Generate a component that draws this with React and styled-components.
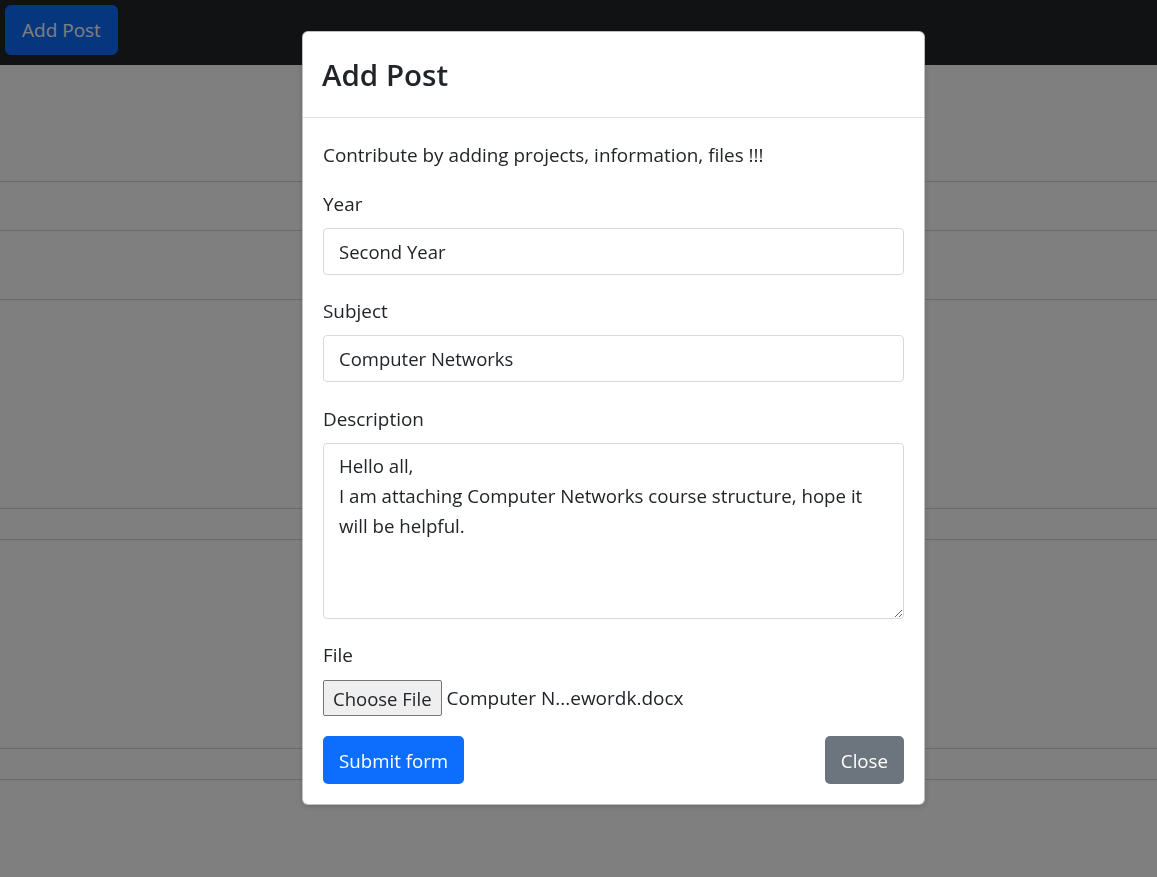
import React from 'react';
import styled, { createGlobalStyle } from 'styled-components';

const GlobalStyle = createGlobalStyle`
  html, body {
    margin: 0;
    padding: 0;
    background: #fff;
    font-family: "Open Sans", "Noto Sans", sans-serif;
    color: #212529;
    overflow: hidden;
  }
  * {
    box-sizing: border-box;
  }
`;

const Page = styled.div`
  width: 100%;
  height: 877px;
  background: #fff;
`;

const NavBar = styled.nav`
  height: 65px;
  background: #212529;
  padding: 5px;
  display: flex;
  align-items: flex-start;
`;

const NavButton = styled.button`
  height: 50px;
  padding: 0 16px;
  border: 1px solid #0d6efd;
  border-radius: 6px;
  background: #0d6efd;
  color: #fff;
  font-family: inherit;
  font-size: 19px;
`;

const Row = styled.div`
  height: ${(p) => p.h}px;
  border-top: ${(p) => (p.line ? '1px solid #d6d6d6' : 'none')};
`;

const Backdrop = styled.div`
  position: fixed;
  inset: 0;
  background: rgba(0, 0, 0, 0.5);
`;

const Dialog = styled.div`
  position: fixed;
  top: 31px;
  left: 302px;
  width: 623px;
  background: #fff;
  border: 1px solid rgba(0, 0, 0, 0.25);
  border-radius: 6px;
  box-shadow: 0 2px 6px rgba(0, 0, 0, 0.15);
`;

const Header = styled.div`
  height: 86px;
  padding: 0 19px;
  display: flex;
  align-items: center;
  border-bottom: 1px solid #dee2e6;
`;

const Title = styled.h3`
  margin: 0;
  font-size: 29.5px;
  font-weight: 600;
  line-height: 1.2;
`;

const Body = styled.div`
  padding: 25px 20px 20px;
`;

const Intro = styled.p`
  margin: 0 0 25px;
  font-size: 18.9px;
  line-height: 24px;
`;

const Group = styled.div`
  margin-bottom: ${(p) => p.mb ?? 24}px;
`;

const Label = styled.label`
  display: block;
  font-size: 18.9px;
  line-height: 24px;
  margin-bottom: ${(p) => p.mb ?? 12}px;
`;

const Input = styled.input`
  display: block;
  width: 100%;
  height: 47px;
  padding: 0 15px;
  border: 1px solid #d6dadf;
  border-radius: 4px;
  font-family: inherit;
  font-size: 18.5px;
  color: #212529;
  outline: none;
`;

const TextArea = styled.textarea`
  display: block;
  width: 100%;
  height: 176px;
  padding: 7px 15px;
  border: 1px solid #d6dadf;
  border-radius: 4px;
  font-family: inherit;
  font-size: 18.7px;
  line-height: 30px;
  color: #212529;
  resize: vertical;
  outline: none;
`;

const FileRow = styled.div`
  display: flex;
  align-items: center;
  gap: 5px;
  height: 36px;
`;

const FileButton = styled.button`
  height: 36px;
  padding: 0 9px;
  background: #efefef;
  border: 1px solid #767676;
  border-radius: 2px;
  font-family: inherit;
  font-size: 18.5px;
  color: #212529;
`;

const FileName = styled.span`
  font-size: 19px;
  color: #212529;
`;

const Footer = styled.div`
  display: flex;
  justify-content: space-between;
  margin-top: 20px;
`;

const Button = styled.button`
  height: 48px;
  padding: 0 16px;
  border: none;
  border-radius: 5px;
  background: ${(p) => (p.variant === 'secondary' ? '#6c757d' : '#0d6efd')};
  color: #fff;
  font-family: inherit;
  font-size: 18.7px;
`;

const rows = [
  { h: 116, line: false },
  { h: 49, line: true },
  { h: 69, line: true },
  { h: 209, line: true },
  { h: 31, line: true },
  { h: 209, line: true },
  { h: 31, line: true },
  { h: 98, line: true },
];

export default function App() {
  return (
    <>
      <GlobalStyle />
      <Page>
        <NavBar>
          <NavButton>Add Post</NavButton>
        </NavBar>
        {rows.map((r, i) => (
          <Row key={i} h={r.h} line={r.line} />
        ))}
      </Page>
      <Backdrop />
      <Dialog>
        <Header>
          <Title>Add Post</Title>
        </Header>
        <Body>
          <Intro>Contribute by adding projects, information, files !!!</Intro>
          <Group>
            <Label>Year</Label>
            <Input defaultValue="Second Year" />
          </Group>
          <Group mb={25}>
            <Label>Subject</Label>
            <Input defaultValue="Computer Networks" />
          </Group>
          <Group>
            <Label>Description</Label>
            <TextArea
              defaultValue={'Hello all,\nI am attaching Computer Networks course structure, hope it will be helpful.'}
            />
          </Group>
          <Group mb={0}>
            <Label mb={13}>File</Label>
            <FileRow>
              <FileButton>Choose File</FileButton>
              <FileName>Computer N...ewordk.docx</FileName>
            </FileRow>
          </Group>
          <Footer>
            <Button>Submit form</Button>
            <Button variant="secondary">Close</Button>
          </Footer>
        </Body>
      </Dialog>
    </>
  );
}
